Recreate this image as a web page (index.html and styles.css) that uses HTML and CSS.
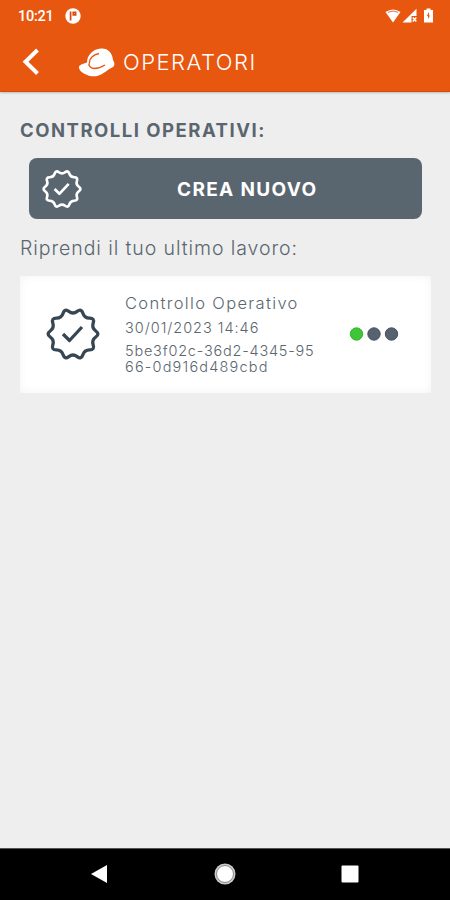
FILE: index.html
```html
<!DOCTYPE html>
<html lang="it">
<head>
<meta charset="utf-8">
<title>Operatori</title>
<link rel="stylesheet" href="styles.css">
</head>
<body>
<svg class="defs" width="0" height="0">
  <symbol id="badge" viewBox="-27 -27 54 54">
    <path d="M22.78-3.02Q27 0 22.78 3.02Q18.55 6.03 20.2 10.95Q21.84 15.87 16.65 15.83Q11.46 15.78 9.9 20.73Q8.34 25.68 4.17 22.59Q0 19.5-4.17 22.59Q-8.34 25.68-9.9 20.73Q-11.46 15.78-16.65 15.83Q-21.84 15.87-20.2 10.95Q-18.55 6.03-22.78 3.02Q-27 0-22.78-3.02Q-18.55-6.03-20.2-10.95Q-21.84-15.87-16.65-15.83Q-11.46-15.78-9.9-20.73Q-8.34-25.68-4.17-22.59Q0-19.5 4.17-22.59Q8.34-25.68 9.9-20.73Q11.46-15.78 16.65-15.83Q21.84-15.87 20.2-10.95Q18.55-6.03 22.78-3.02Z"/>
    <path d="M-10 0L-3.500 6.500L9-7"/>
  </symbol>
</svg>
<div class="screen">
  <header class="top">
    <div class="status">
      <span class="time">10:21</span>
      <svg class="app-dot" width="16" height="16" viewBox="0 0 16 16"><circle cx="8" cy="8" r="7.7" fill="#fff"/><path d="M5.6 3.500v9M8.300 4.400h2.300v2.400H8.300Z" fill="none" stroke="#d9480f" stroke-width="1.7"/></svg>
      <svg class="signals" width="50" height="16" viewBox="0 0 50 16">
        <path d="M0.500 4Q8-1 15.500 4L8 14.500Z" fill="#fff"/><path d="M3 4.300Q8 1.800 13 4.300" fill="none" stroke="#e8724a" stroke-width="1"/>
        <path d="M17.500 14.500L31.500 0.800V8H26.500V14.500Z" fill="#fff"/><path d="M27.800 9.500L31.300 13.500M31.300 9.500L27.800 13.500" stroke="#fff" stroke-width="1.500"/>
        <path d="M39.500 2H41.500V.5H45.500V2H48V14.500H39V2Z" fill="#fff"/><path d="M43.500 4.500L42 8H43V11L45 7.500H44V4.500Z" fill="#e85710"/>
      </svg>
    </div>
    <div class="bar">
      <svg class="back" width="18" height="28" viewBox="0 0 18 28"><path d="M16.500 2L4.500 13.800L16.500 25.500" fill="none" stroke="#fff" stroke-width="4"/></svg>
      <svg class="helmet" width="36" height="29" viewBox="0 0 36 29">
        <path d="M0 18.500C1 16.500 5 15.500 8 14.500C8 7 14 1 22 .5C29 0 33.500 5 34 12C36 15 36 18 33 19.500C28 22 25 26 18 28C10 29.500-1 24 0 18.500Z" fill="#fff"/>
        <path d="M20 5.500C14 7 10.500 10 10.500 14.500C9 17 11 20.500 15 20.500C20 20.500 23 19 26 17" fill="none" stroke="#e85710" stroke-width="1.300"/>
      </svg>
      <h1 class="title">OPERATORI</h1>
    </div>
  </header>
  <main class="content">
    <h2 class="heading">CONTROLLI OPERATIVI:</h2>
    <button class="create"><svg class="badge small"><use href="#badge"/></svg><span class="create-label">CREA NUOVO</span></button>
    <p class="resume">Riprendi il tuo ultimo lavoro:</p>
    <section class="card">
      <svg class="badge large"><use href="#badge"/></svg>
      <div class="info">
        <div class="name">Controllo Operativo</div>
        <div class="date">30/01/2023 14:46</div>
        <div class="code"><div class="code-a">5be3f02c-36d2-4345-95</div><div class="code-b">66-0d916d489cbd</div></div>
      </div>
      <svg class="dots" width="50" height="14" viewBox="0 0 50 14"><circle class="dot on" cx="7.500" cy="7" r="6.200"/><circle class="dot" cx="25" cy="7" r="6.200"/><circle class="dot" cx="42.500" cy="7" r="6.200"/></svg>
    </section>
  </main>
  <nav class="nav">
    <svg width="16" height="18" viewBox="0 0 16 18"><path d="M0 9L16 0V18Z" fill="#fff"/></svg>
    <svg class="home" width="22" height="22" viewBox="0 0 22 22"><circle cx="11" cy="11" r="10.500" fill="#ccc"/><circle cx="11" cy="11" r="8.500" fill="#fff" stroke="#888" stroke-width="1"/></svg>
    <svg width="18" height="18" viewBox="0 0 18 18"><rect x=".5" y=".5" width="17" height="17" rx="1" fill="#fff"/></svg>
  </nav>
</div>
</body>
</html>
```
FILE: styles.css
```css
* { box-sizing: border-box; }
body { margin: 0; font-family: Inter, "Liberation Sans", sans-serif; color: #5a666f; }
h1, h2, p { margin: 0; white-space: nowrap; }
svg { display: block; flex: none; }
.defs { position: absolute; }
.screen { width: 450px; height: 900px; display: flex; flex-direction: column; background: #eee; }
.top { height: 92px; background: #e85710; color: #fff; border-bottom: 1px solid #d64b0b; box-shadow: 0 1px 2px #bbb; }
.status { height: 32px; display: flex; align-items: center; padding: 0 15px 0 18px; }
.time { width: 47px; padding-top: 2px; font: 500 14.5px/20px Roboto, sans-serif; letter-spacing: -.25px; }
.signals { margin-left: auto; }
.bar { height: 60px; display: flex; align-items: center; padding-left: 21px; }
.helmet { margin-left: 40px; }
.title { margin-left: 8px; font-size: 22px; font-weight: 300; line-height: 28px; letter-spacing: 1.5px; }
.content { flex: 1; padding: 28px 19px 0 20px; }
.heading { font-size: 18.5px; line-height: 20px; font-weight: 700; letter-spacing: 1.5px; }
.create { display: flex; align-items: center; width: 393px; height: 61px; margin: 18px 0 0 9px; padding: 0 0 0 13px; border: 0; border-radius: 8px; background: #5a666f; color: #fff; font: 700 19px Inter, sans-serif; }
.create-label { margin-left: 95px; padding-top: 2px; white-space: nowrap; letter-spacing: 1.35px; }
.badge { fill: none; stroke: currentColor; stroke-width: 3.3; stroke-linejoin: round; stroke-linecap: butt; }
.small { width: 40px; height: 40px; stroke-width: 3.6; }
.large { width: 54px; height: 54px; color: #364653; margin-top: -1px; }
.resume { margin-top: 17px; font-size: 19.5px; line-height: 24px; font-weight: 300; letter-spacing: .92px; }
.card { display: flex; align-items: center; height: 117px; margin-top: 16px; padding: 0 32px 0 26px; background: #fff; box-shadow: inset 0 0 10px #f3f3f3; }
.info { margin-left: 25px; align-self: flex-start; padding-top: 17px; white-space: nowrap; font-weight: 300; }
.name { font-size: 16.5px; line-height: 21px; letter-spacing: 1.33px; }
.date { margin-top: 4px; font-size: 14.5px; line-height: 20px; letter-spacing: .97px; }
.code { margin-top: 5px; font-size: 14.5px; line-height: 16px; }
.code-a { letter-spacing: .78px; }
.code-b { letter-spacing: 1.18px; }
.dots { margin-left: auto; margin-top: -1px; }
.dot { fill: #566270; stroke: #465260; stroke-width: 1; }
.on { fill: #3fc43a; stroke: #2cba27; }
.nav { height: 52px; display: flex; align-items: center; justify-content: space-between; padding: 0 91px 2px; background: #000; border-top: 1px solid #555; }
.home { margin-left: 2px; }
```
